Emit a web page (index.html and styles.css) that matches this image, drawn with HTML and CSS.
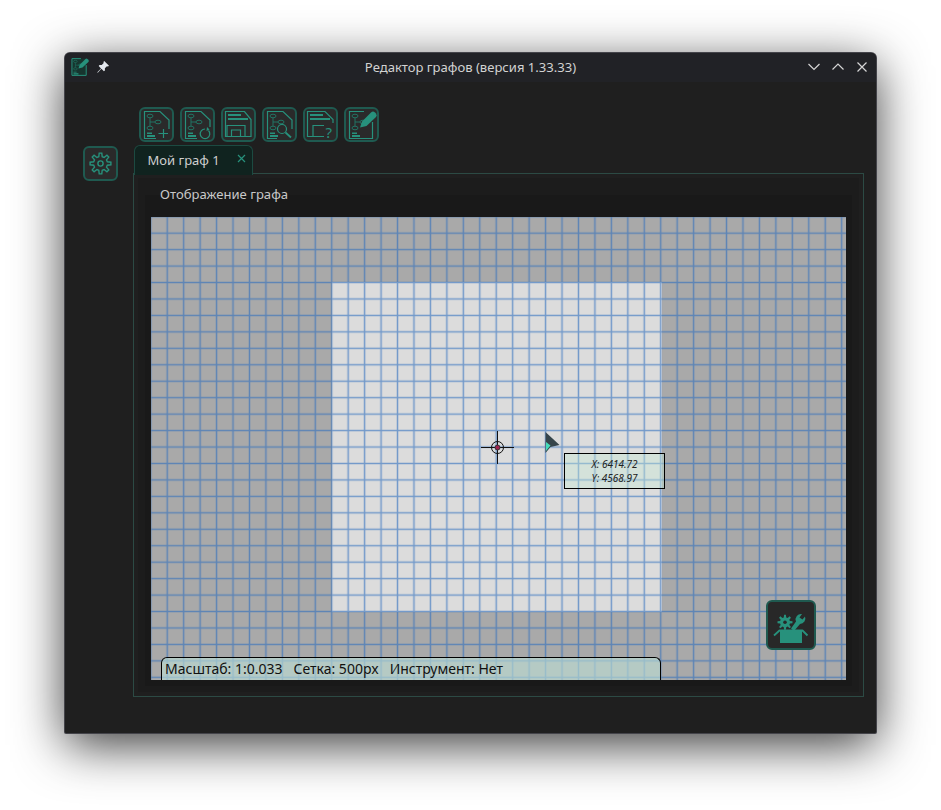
FILE: index.html
```html
<!DOCTYPE html>
<html lang="ru">
  <head>
    <meta charset="UTF-8" />
    <title>Редактор графов</title>
    <link rel="stylesheet" href="styles.css">
  </head>
  <body>
    <svg class="defs" width="0" height="0">
      <defs>
        <g id="graph" class="graph">
          <ellipse cx="11" cy="9" rx="3" ry="1.8" />
          <ellipse cx="11" cy="21" rx="3" ry="1.8" />
          <ellipse cx="19" cy="15" rx="3" ry="1.8" />
          <path d="M11 11V19M11 15H16" />
          <path class="solid" d="M8 25.5h5v1.5h-5zM8 28h8v2h-8z" />
        </g>
        <polygon id="gear" points="6.79,-1.7 10.4,-1.3 10.4,1.3 6.79,1.7 6,3.6 8.27,6.43 6.43,8.27 3.6,6 1.7,6.79 1.3,10.4 -1.3,10.4 -1.7,6.79 -3.6,6 -6.43,8.27 -8.27,6.43 -6,3.6 -6.79,1.7 -10.4,1.3 -10.4,-1.3 -6.79,-1.7 -6,-3.6 -8.27,-6.43 -6.43,-8.27 -3.6,-6 -1.7,-6.79 -1.3,-10.4 1.3,-10.4 1.7,-6.79 3.6,-6 6.43,-8.27 8.27,-6.43 6,-3.6" />
        <g id="edit-doc">
          <use href="#graph" />
          <path d="M20 4.5H5.5V31.5H28.5V15" />
          <path class="solid" d="M16 20.5L18 14.5L27 5.5Q29 3.5 31 5.5L32 6.5Q33.5 8.5 32 10L22.5 19Z" />
        </g>
        <pattern id="grid" x="8" y="-8.5" width="16.45" height="16.45" patternUnits="userSpaceOnUse">
          <path d="M8.225 0V16.45M0 8.225H16.45" />
        </pattern>
      </defs>
    </svg>

    <div class="window">
      <div class="titlebar">
        <div class="title-left">
          <svg class="app-icon" viewBox="4 3 29 30">
            <rect class="app-fill" x="5.500" y="4.500" width="23" height="27" />
            <use href="#edit-doc" />
          </svg>
          <svg class="pin" viewBox="0 0 12 12">
            <path d="M7.200 0L12 4.800L11 5.600L9.900 5.300L7.900 7.300L7.900 9.500L6.900 10.300L4.400 7.800L0.800 11.700L0.300 11.200L4 7.400L1.700 5.100L2.500 4.100L4.700 4.100L6.700 2.100L6.400 1Z" />
          </svg>
        </div>
        <div class="title-text">Редактор графов (версия 1.33.33)</div>
        <div class="title-right">
          <svg viewBox="0 0 12 12"><path d="M0.500 3L6 8.500L11.500 3" /></svg>
          <svg viewBox="0 0 12 12"><path d="M0.500 8.500L6 3L11.500 8.500" /></svg>
          <svg viewBox="0 0 12 12"><path d="M1.500 1.500L10.500 10.500M10.500 1.500L1.500 10.500" /></svg>
        </div>
      </div>

      <div class="content">
        <div class="toolbar">
          <div class="btn">
            <svg viewBox="2 2 31 31">
              <use href="#graph" />
              <path d="M17 31.500H5.500V4.500H21L30 13V22" />
              <path d="M19.500 26.500H29M24.500 22V31" />
            </svg>
          </div>
          <div class="btn">
            <svg viewBox="2 2 31 31">
              <use href="#graph" />
              <path d="M17 31.500H5.500V4.500H21L30 13V20" />
              <path d="M28.500 23.500A4.800 4.800 0 1 1 25 22" />
              <path class="solid" d="M27 20L29.500 22.500L26.500 24Z" />
            </svg>
          </div>
          <div class="btn">
            <svg viewBox="2 2 31 31">
              <path d="M4.500 29.500V4.500H23.500L30 12.500V29.500Z" />
              <path class="thick" d="M7 8H20M7 12H27" />
              <path d="M6 29.500V18.500H24V29.500M10.500 29.500V23H19.500V29.500" />
            </svg>
          </div>
          <div class="btn">
            <svg viewBox="2 2 31 31">
              <use href="#graph" />
              <path d="M15 31.500H5.500V4.500H21L30 13V22" />
              <circle cx="20" cy="22" r="4.500" />
              <path class="thick" d="M23.500 25.500L29 30.500" />
            </svg>
          </div>
          <div class="btn">
            <svg viewBox="2 2 31 31">
              <path d="M21 29.500H4.500V4.500H22L30 12.500V16" />
              <path class="thick" d="M7 8H20M7 12H27" />
              <path d="M10 29.500V18.500H21" />
              <text class="hint" x="22.500" y="31">?</text>
            </svg>
          </div>
          <div class="btn">
            <svg viewBox="2 2 31 31"><use href="#edit-doc" /></svg>
          </div>
        </div>

        <div class="side">
          <div class="btn">
            <svg class="gear-icon" viewBox="-15.500 -15.500 31 31">
              <use href="#gear" />
              <circle r="2.600" />
            </svg>
          </div>
        </div>

        <div class="main">
          <div class="tab">
            <span>Мой граф 1</span>
            <svg class="tab-close" viewBox="0 0 9 9"><path d="M1 1L8 8M8 1L1 8" /></svg>
          </div>
          <div class="pane">
            <div class="pane-inner">
              <div class="group">
                <div class="group-title">Отображение графа</div>
                <div class="canvas">
                  <svg class="sheet">
                    <rect class="sheet-page" x="181" y="65" width="330" height="330" />
                    <rect class="sheet-grid" width="100%" height="100%" fill="url(#grid)" />
                  </svg>
                  <svg class="crosshair" viewBox="0 0 33 33">
                    <path d="M0 16.500H33M16.500 0V33" />
                    <circle cx="16.500" cy="16.500" r="6" />
                    <circle class="dot" cx="16.500" cy="16.500" r="2.500" />
                  </svg>
                  <svg class="cursor" viewBox="0 0 16 21">
                    <path class="cursor-body" d="M0.500 0L14.500 13L5.500 15L0.500 21Z" />
                    <path class="cursor-tip" d="M1 10L5.500 13.500L1 19Z" />
                  </svg>
                  <div class="coords">
                    <div>X: 6414.72</div>
                    <div>Y: 4568.97</div>
                  </div>
                  <div class="tools-btn">
                    <svg viewBox="2 2 46 46">
                      <use href="#gear" transform="translate(19 22.300) scale(.72)" class="solid" />
                      <circle class="hole" cx="19" cy="22.300" r="1.800" />
                      <path class="solid" d="M36 14L33.500 17.500L36.500 19.500L39 16.500A5.500 5.500 0 0 1 34 24L28 31L25 28.500L30 21.500A5.500 5.500 0 0 1 36 14Z" />
                      <path class="solid" d="M14 29.500H36V43H14Z" />
                      <path class="thick" d="M8 35.500L14 30M36 30L41.500 35.500" />
                    </svg>
                  </div>
                  <div class="status">
                    <span>Масштаб: 1:0.033</span>
                    <span>Сетка: 500px</span>
                    <span>Инструмент: Нет</span>
                  </div>
                </div>
              </div>
            </div>
          </div>
        </div>
      </div>
    </div>
  </body>
</html>
```

FILE: styles.css
```css
html,
body {
  height: 100%;
}
body {
  margin: 0;
  padding: 53px 0 0 65px;
  box-sizing: border-box;
  background: #fff;
  overflow: hidden;
  font-family: "Noto Sans", sans-serif;
}
.defs {
  display: block;
  height: 0;
}
svg {
  display: block;
  fill: none;
  stroke: #27917c;
  stroke-width: 1.2;
  overflow: visible;
}
.solid {
  fill: #27917c;
  stroke: none;
}
.thick {
  stroke-width: 1.800;
}
.graph {
  stroke: #207a69;
  stroke-width: 0.900;
}
.hint {
  fill: #27917c;
  stroke: none;
  font-size: 15px;
  font-family: "Noto Sans", sans-serif;
}
.window {
  width: 811px;
  height: 680px;
  display: flex;
  flex-direction: column;
  background: #1f1f1f;
  border-radius: 5px 5px 1px 1px;
  box-shadow: 0 0 0 1px #44444a, 0 12px 50px rgba(0, 0, 0, 0.78);
}
.titlebar {
  flex: none;
  height: 29px;
  box-sizing: border-box;
  padding-bottom: 1px;
  display: grid;
  grid-template-columns: 1fr auto 1fr;
  align-items: center;
  background: #212226;
  border-radius: 5px 5px 0 0;
}
.title-left {
  display: flex;
  align-items: center;
  gap: 8px;
  padding-left: 6px;
}
.app-icon {
  width: 18px;
  height: 20px;
  stroke-width: 1.600;
}
.app-fill {
  fill: #17352f;
  stroke: none;
}
.pin {
  width: 12px;
  height: 12px;
  fill: #e4e8ee;
  stroke: none;
}
.title-text {
  font-size: 13.070px;
  color: #d2d2d2;
}
.title-right {
  display: flex;
  justify-content: flex-end;
  gap: 12px;
  padding-right: 8px;
}
.title-right svg {
  width: 12px;
  height: 12px;
  stroke: #d6d6d6;
}
.content {
  flex: 1;
  min-height: 0;
  display: grid;
  grid-template-columns: 68px 731px;
  grid-template-rows: 35px 1fr;
  row-gap: 3px;
  padding: 25px 0 36px;
}
.toolbar {
  grid-column: 2;
  grid-row: 1;
  display: flex;
  gap: 6px;
  padding-left: 6px;
}
.side {
  grid-column: 1;
  grid-row: 2;
  padding: 1px 0 0 18px;
}
.btn {
  width: 35px;
  height: 35px;
  box-sizing: border-box;
  background: #2a2a2a;
  border: 2px solid #1f5a50;
  border-radius: 6px;
}
.btn svg {
  width: 31px;
  height: 31px;
}
.btn .gear-icon {
  stroke-width: 1.400;
}
.main {
  grid-column: 2;
  grid-row: 2;
  display: flex;
  flex-direction: column;
  min-height: 0;
}
.tab {
  position: relative;
  flex: none;
  width: 119px;
  height: 30px;
  margin: 0 0 -2px 1px;
  box-sizing: border-box;
  display: flex;
  align-items: center;
  justify-content: space-between;
  padding: 0 6px 2px 12.500px;
  background: #10231f;
  border: 1px solid #1c4a41;
  border-bottom: 0;
  border-radius: 6px 6px 0 0;
  font-size: 13px;
  color: #cfcfcf;
}
.tab-close {
  width: 9px;
  height: 9px;
  margin-bottom: 2px;
}
.pane {
  flex: 1;
  min-height: 0;
  display: flex;
  border: 1px solid #2c4a44;
  background: #1f1f1f;
  padding: 4px;
}
.pane-inner {
  flex: 1;
  display: flex;
  background: #1c1c1c;
  padding: 17px 7px 6px 7px;
}
.group {
  flex: 1;
  display: flex;
  flex-direction: column;
  background: #191919;
  padding: 0 6px 6px 6px;
}
.group-title {
  flex: none;
  height: 22px;
  margin: -12px 0 12px 9px;
  line-height: 22px;
  font-size: 13.100px;
  color: #c8c8c8;
}
.canvas {
  position: relative;
  flex: 1;
  background: #a9a9a9;
  overflow: hidden;
}
.sheet {
  position: absolute;
  left: 0;
  top: 0;
  width: 100%;
  height: 100%;
}
.sheet-page {
  fill: #dcdcdc;
  stroke: none;
}
.sheet-grid {
  stroke: none;
}
#grid path {
  stroke: rgba(44, 108, 190, 0.6);
  stroke-width: 1.500;
}
.crosshair {
  position: absolute;
  left: 330px;
  top: 214px;
  width: 33px;
  height: 33px;
  stroke: #111;
  stroke-width: 1;
}
.dot {
  fill: #a0224e;
  stroke: #333;
}
.cursor {
  position: absolute;
  left: 394px;
  top: 215px;
  width: 16px;
  height: 21px;
  stroke: none;
}
.cursor-body {
  fill: #36454b;
}
.cursor-tip {
  fill: #45dcba;
}
.coords {
  position: absolute;
  left: 413px;
  top: 236px;
  width: 101px;
  height: 36px;
  box-sizing: border-box;
  border: 1px solid #000;
  background: rgba(200, 235, 215, 0.4);
  display: flex;
  flex-direction: column;
  justify-content: center;
  text-align: center;
  font-size: 10px;
  font-style: italic;
  line-height: 14px;
  color: #222;
}
.tools-btn {
  position: absolute;
  right: 30px;
  bottom: 30px;
  width: 50px;
  height: 50px;
  box-sizing: border-box;
  background: #282828;
  border: 2px solid #1f5a50;
  border-radius: 6px;
}
.tools-btn svg {
  width: 46px;
  height: 46px;
}
.hole {
  fill: #282828;
  stroke: none;
}
.status {
  position: absolute;
  left: 10px;
  bottom: 0;
  width: 500px;
  height: 23px;
  box-sizing: border-box;
  display: flex;
  align-items: center;
  gap: 11px;
  padding: 0 0 1px 3px;
  border: 1px solid #000;
  border-bottom: 0;
  border-radius: 6px 6px 0 0;
  background: rgba(190, 225, 215, 0.6);
  font-size: 14px;
  color: #111;
}
```
